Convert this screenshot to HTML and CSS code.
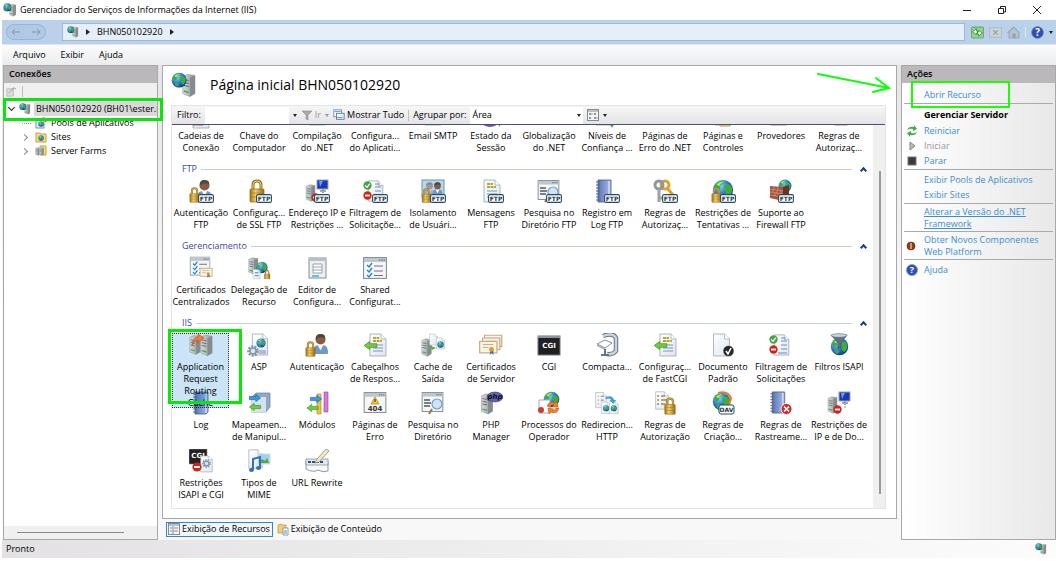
FILE: index.html
```html
<!DOCTYPE html>
<html lang="pt-BR">
<head>
<meta charset="utf-8">
<title>Gerenciador do Serviços de Informações da Internet (IIS)</title>
<link rel="stylesheet" href="styles.css">
</head>
<body>
<svg class="sprite" aria-hidden="true">
  <defs>
    <radialGradient id="gBlue" cx=".35" cy=".3" r=".8"><stop offset="0" stop-color="#8fd4ff"/><stop offset=".5" stop-color="#2a78d8"/><stop offset="1" stop-color="#0b2f86"/></radialGradient>
    <linearGradient id="gGold" x1="0" x2="1"><stop offset="0" stop-color="#a97413"/><stop offset=".4" stop-color="#f0cd6a"/><stop offset="1" stop-color="#9a6a12"/></linearGradient>
    <linearGradient id="gSteel" x1="0" x2="1"><stop offset="0" stop-color="#d9dcde"/><stop offset="1" stop-color="#8d9296"/></linearGradient>
    <linearGradient id="gPage" x1="0" y1="0" x2="1" y2="1"><stop offset="0" stop-color="#ffffff"/><stop offset="1" stop-color="#dde6ee"/></linearGradient>
    <linearGradient id="gNote" x1="0" x2="1"><stop offset="0" stop-color="#5875b8"/><stop offset="1" stop-color="#a9bde4"/></linearGradient>
  </defs>
  <symbol id="globe" viewBox="0 0 24 24"><circle cx="12" cy="12" r="11" fill="url(#gBlue)"/><path d="M3 7Q7 1 13 2Q12 6 9 7Q10 11 6 12Q2 12 3 7ZM15 6Q20 5 22 10Q22 16 18 19Q14 17 15 13Q11 10 15 6ZM6 15Q11 15 12 19Q10 22 8 21Q5 19 6 15Z" fill="#3fae34"/><path d="M5 6Q9 2 13 3Q9 5 8 8Z" fill="#a9ea80"/></symbol>
  <symbol id="tower" viewBox="0 0 14 24"><path d="M1 3L6 1L13 2V20L8 23L1 20Z" fill="url(#gSteel)" stroke="#8b8f94" stroke-width=".6"/><path d="M8 4L13 2V20L8 23Z" fill="#868b8f"/><path d="M2 6L7 7M2 9L7 10M2 12L7 13" stroke="#63686c"/><path d="M2 17.500L7 19" stroke="#37b34a" stroke-width="1.500"/></symbol>
  <symbol id="server" viewBox="0 0 24 24"><use href="#tower" x="10" y="1" width="13" height="23"/><use href="#globe" x="0" y="0" width="15" height="15"/></symbol>
  <symbol id="page" viewBox="0 0 18 24"><path d="M1 1H12L17 6V23H1Z" fill="url(#gPage)" stroke="#a3adb4" stroke-width=".9"/><path d="M12 1V6H17" fill="#fff" stroke="#a3adb4" stroke-width=".8"/></symbol>
  <symbol id="text" viewBox="0 0 18 24"><use href="#page" width="18" height="24"/><path d="M4 5H10M4 8H13" stroke="#b5a529" stroke-width="1.800" stroke-dasharray="3 .6"/><path d="M4 12H14M4 15H14M4 18H14" stroke="#7793c8" stroke-width="1.200"/></symbol>
  <symbol id="lock" viewBox="0 0 16 24"><path d="M4 12V6Q4 2 8 2Q12 2 12 6V12" fill="none" stroke="#9b7419" stroke-width="3"/><path d="M4 12V6Q4 2 8 2Q12 2 12 6V12" fill="none" stroke="#ead07a" stroke-width="1"/><rect x="1" y="10" width="14" height="13" rx="1" fill="url(#gGold)" stroke="#8f6515" stroke-width=".7"/><path d="M2 14H14M2 18H14" stroke="#8f6515" stroke-opacity=".5"/></symbol>
  <symbol id="user" viewBox="0 0 18 24"><path d="M1 23Q0 14 6 13H12Q18 14 17 23Z" fill="#6f9ac6"/><path d="M6 13L9 19L12 13Z" fill="#fff"/><circle cx="9" cy="7" r="5.500" fill="#8a5a3a"/><path d="M4 7Q3 1 9 1Q15 1 14 6Q9 3 4 7Z" fill="#4d4644"/></symbol>
  <symbol id="ftp" viewBox="0 0 16 9"><rect x=".6" y=".6" width="14.800" height="7.800" rx="1.500" fill="#fff" stroke="#274a63" stroke-width="1.100"/><text x="8" y="6.900" class="badge-text">FTP</text></symbol>
  <symbol id="win" viewBox="0 0 24 22"><rect x=".6" y=".6" width="22.800" height="20.800" fill="#f4f6f7" stroke="#7d878e" stroke-width="1"/><rect x="1" y="1" width="22" height="4" fill="#bfc7cc"/><path d="M16 3H22" stroke="#5e6a72" stroke-dasharray="1.500 .8"/></symbol>
  <symbol id="checks" viewBox="0 0 24 22"><use href="#win" width="24" height="22"/><path d="M4 8L6 10L9 6M4 13L6 15L9 11M4 18L6 20L9 16" fill="none" stroke="#2389c9" stroke-width="1.400"/><path d="M11 9H20M11 14H20M11 18.500H20" stroke="#7a6b8c" stroke-width="1.200"/></symbol>
  <symbol id="ok" viewBox="0 0 10 10"><circle cx="5" cy="5" r="4.600" fill="#47a447"/><path d="M2.500 5L4.500 7L7.500 3" fill="none" stroke="#fff" stroke-width="1.300"/></symbol>
  <symbol id="no" viewBox="0 0 10 10"><circle cx="5" cy="5" r="4.600" fill="#cf2418"/><path d="M2.200 5H7.800" stroke="#fff" stroke-width="2"/></symbol>
  <symbol id="note" viewBox="0 0 18 24"><path d="M3 1H16V21L14 23H3Z" fill="url(#gNote)" stroke="#42588b" stroke-width=".8"/><path d="M14 2V22" stroke="#e9effa"/><path d="M1 3H5M1 6H5M1 9H5M1 12H5M1 15H5M1 18H5M1 21H5" stroke="#59677d"/></symbol>
  <symbol id="net" viewBox="0 0 24 24"><use href="#tower" x="0" y="5" width="11" height="18"/><rect x="12" y="1" width="11" height="9" fill="#1838b8" stroke="#9aa3aa"/><path d="M14 2L18 2L15 8Z" fill="#729cf0"/><path d="M15 12H21M18 10V12" stroke="#879096" stroke-width="1.500"/><path d="M18 13V18" stroke="#333" stroke-dasharray="1 1.500"/><use href="#no" x="6" y="14" width="9" height="9"/></symbol>
  <symbol id="filter" viewBox="0 0 24 24"><use href="#page" x="4" y="1" width="17" height="22"/><path d="M12 5H17M12 8H18M12 12H18M12 16H18M9 20H18" stroke="#6e8bc4" stroke-width="1.200"/><use href="#ok" x="0" y="2" width="9" height="9"/><use href="#no" x="0" y="12" width="9" height="9"/></symbol>
  <symbol id="lens" viewBox="0 0 24 24"><use href="#win" x="0" y="1" width="23" height="20"/><path d="M3 9H9M3 12H10M3 15H9" stroke="#4d5964" stroke-width="1.300"/><path d="M11 18L8 23" stroke="#8f7a52" stroke-width="2"/><circle cx="16" cy="13" r="5" fill="#c9e5f8" stroke="#7d9db5" stroke-width="1.200"/></symbol>
  <symbol id="cert" viewBox="0 0 20 15"><rect x=".7" y=".7" width="18" height="12" fill="#faf3e4" stroke="#c5a77f" stroke-width="1.200"/><path d="M4 4H15M4 7H10" stroke="#b7ad98"/><path d="M12 10L11 15L13 13L15 15L15 10" fill="#3c71c1"/><circle cx="13" cy="9" r="2.500" fill="#e49b1c"/></symbol>
  <symbol id="gear" viewBox="0 0 12 12"><circle cx="6" cy="6" r="4.300" fill="none" stroke="#8195aa" stroke-width="3" stroke-dasharray="1.900 1.100"/><circle cx="6" cy="6" r="3" fill="#dde5ed" stroke="#8195aa" stroke-width="1.500"/></symbol>
  <symbol id="garrow" viewBox="0 0 16 10"><path d="M1 5L7 .500V3H15V7H7V9.500Z" fill="#72cb3b" stroke="#3b8f22" stroke-width=".8"/></symbol>
  <symbol id="barrow" viewBox="0 0 16 10"><path d="M15 5L9 .500V3H1V7H9V9.500Z" fill="#379be2" stroke="#175fa5" stroke-width=".8"/></symbol>

  <symbol id="i-auth" viewBox="0 0 24 24"><use href="#user" x="7" y="0" width="17" height="22"/><use href="#lock" x="0" y="8" width="11" height="16"/></symbol>
  <symbol id="i-iso" viewBox="0 0 24 24"><rect x="1" y="1" width="22" height="17" fill="#b5d7ef" stroke="#6c93b1"/><use href="#user" x="3" y="2" width="11" height="16" opacity=".5"/><use href="#user" x="11" y="2" width="11" height="16"/><use href="#lock" x="0" y="9" width="11" height="15"/></symbol>
  <symbol id="i-keys" viewBox="0 0 24 24"><g fill="none"><circle cx="12" cy="6" r="4" stroke="#e0a32a" stroke-width="3"/><path d="M14 9L20 16" stroke="#e0a32a" stroke-width="3"/><circle cx="6" cy="6" r="4" stroke="#8e959c" stroke-width="3"/><path d="M6 10V23M6 19H9" stroke="#9ca3aa" stroke-width="3"/></g></symbol>
  <symbol id="i-globelock" viewBox="0 0 24 24"><use href="#globe" x="1" y="0" width="22" height="22"/><use href="#lock" x="0" y="8" width="11" height="16"/></symbol>
  <symbol id="i-wall" viewBox="0 0 24 24"><use href="#globe" x="9" y="0" width="14" height="14"/><path d="M1 7L14 8V22L1 19Z" fill="#a6533d"/><path d="M14 8L20 6V19L14 22Z" fill="#713124"/><path d="M1 10L14 12M1 13L14 15M1 16L14 18M5 7V10M9 8V11M4 11V13M8 12V15M12 12V15M6 14V17M10 15V18" stroke="#d99d88" stroke-width=".7"/></symbol>
  <symbol id="i-certs" viewBox="0 0 25 24"><use href="#checks" x="0" y="0" width="23" height="20"/><use href="#cert" x="11" y="10" width="14" height="14"/></symbol>
  <symbol id="i-deleg" viewBox="0 0 25 24"><use href="#tower" x="1" y="0" width="11" height="20"/><use href="#globe" x="9" y="5" width="13" height="13"/><use href="#page" x="5" y="13" width="10" height="11"/><path d="M8 17H12M8 20H12" stroke="#3b83cd"/><use href="#lock" x="17" y="14" width="8" height="10"/></symbol>
  <symbol id="i-editor" viewBox="0 0 24 24"><rect x="4" y="2" width="17" height="20" fill="#eceff1" stroke="#838d94"/><rect x="4" y="2" width="17" height="3" fill="#b8c0c6"/><path d="M8 8H17V17H8ZM8 11H17M8 14H17" fill="#fff" stroke="#9aa4ab"/><path d="M7 20H14" stroke="#32b7ea" stroke-width="1.500"/></symbol>
  <symbol id="i-arr" viewBox="0 0 24 24"><use href="#tower" x="0" y="1" width="12" height="22"/><use href="#tower" x="11" y="1" width="13" height="23"/><path d="M3 12Q4 5 9 4V1L15 5L9 10V7Q5 8 3 12Z" fill="#f17d31" stroke="#b74b12" stroke-width=".6"/></symbol>
  <symbol id="i-asp" viewBox="0 0 24 24"><use href="#page" x="4" y="0" width="18" height="23"/><use href="#globe" x="9" y="5" width="10" height="10"/><path d="M12 18H19M12 20H19" stroke="#6e8bc4"/><use href="#gear" x="0" y="12" width="12" height="12"/></symbol>
  <symbol id="i-head" viewBox="0 0 24 24"><use href="#text" x="6" y="0" width="18" height="24"/><use href="#garrow" x="0" y="8" width="15" height="9"/></symbol>
  <symbol id="i-cache" viewBox="0 0 24 24"><use href="#tower" x="0" y="5" width="11" height="19"/><use href="#page" x="8" y="0" width="9" height="13"/><use href="#page" x="15" y="4" width="9" height="13"/><use href="#globe" x="16" y="8" width="7" height="7"/><path d="M8 12L15 15L11 17Z" fill="#4bbb35"/></symbol>
  <symbol id="i-scert" viewBox="0 0 25 24"><use href="#cert" x="5" y="1" width="20" height="15"/><use href="#cert" x="3" y="4" width="20" height="15"/><use href="#cert" x="0" y="7" width="20" height="16"/></symbol>
  <symbol id="i-cgi" viewBox="0 0 24 24"><rect x="1" y="3" width="22" height="19" fill="#1e2022" stroke="#71777c"/><path d="M1 4H23" stroke="#8c959b" stroke-width="2"/><text x="12" y="15" class="cgi-text">CGI</text></symbol>
  <symbol id="i-comp" viewBox="0 0 24 24"><path d="M8 3Q18 -1 21 5V18Q18 22 12 21" fill="none" stroke="#657382" stroke-width="4.500"/><path d="M8 3Q18 -1 21 5V18Q18 22 12 21" fill="none" stroke="#c9d3dc" stroke-width="2.500"/><path d="M2 11L10 7L17 10L10 15Z" fill="#fff" stroke="#889098"/><path d="M2 11V13L10 17V15Z" fill="#a6aeb5"/><path d="M10 16V22M6 22H14" stroke="#667480" stroke-width="2"/></symbol>
  <symbol id="i-def" viewBox="0 0 24 24"><use href="#page" x="1" y="0" width="19" height="24"/><circle cx="17.500" cy="18" r="5.500" fill="#22272b" stroke="#fff" stroke-width=".5"/><path d="M15 18L17 21L20 15" fill="none" stroke="#fff" stroke-width="1.600"/></symbol>
  <symbol id="i-isapi" viewBox="0 0 24 24"><use href="#globe" x="3" y="4" width="19" height="19"/><path d="M4 2Q12 5 20 2L14 10V15H11V10Z" fill="#5c7386" stroke="#354756" stroke-width=".6"/><ellipse cx="12" cy="2.500" rx="8" ry="1.800" fill="#c9d6e0" stroke="#536777" stroke-width=".6"/></symbol>
  <symbol id="i-map" viewBox="0 0 24 24"><path d="M5 6L9 2H23V16L19 21H5Z" fill="#91a9c5" stroke="#6b819c" stroke-width=".7"/><path d="M5 6H19V21H5Z" fill="#d5e1ef"/><use href="#barrow" x="0" y="3" width="16" height="8"/><use href="#garrow" x="0" y="12" width="16" height="8"/></symbol>
  <symbol id="i-mod" viewBox="0 0 24 24"><path d="M12 3H16V23H12Z" fill="#f0c33b" stroke="#a8801c" stroke-width=".6"/><path d="M19 1H23V21H19Z" fill="#d57ad6" stroke="#9a3e9b" stroke-width=".6"/><use href="#barrow" x="4" y="4" width="14" height="8"/><use href="#garrow" x="0" y="13" width="15" height="8"/></symbol>
  <symbol id="i-404" viewBox="0 0 24 24"><use href="#win" x="0" y="1" width="24" height="21"/><path d="M12 6L16 13H8Z" fill="#f7ca2c" stroke="#aa7f13" stroke-width=".7"/><path d="M12 8V11" stroke="#222"/><text x="12" y="20" class="err-text">404</text></symbol>
  <symbol id="i-php" viewBox="0 0 24 24"><use href="#tower" x="1" y="2" width="14" height="22"/><ellipse cx="16" cy="6" rx="8" ry="5" fill="#5f64b4" stroke="#2a2e6a" stroke-width=".5"/><text x="16" y="8" class="php-text">php</text></symbol>
  <symbol id="i-proc" viewBox="0 0 24 24"><use href="#globe" x="6" y="0" width="17" height="17"/><path d="M2 9H13V22H2Z" fill="#fff" stroke="#a4adb4"/><circle cx="4" cy="19" r="3" fill="#d33b2c"/><path d="M10 15Q13 9 18 12L20 10L21 16L15 16L17 14Q14 13 13 16ZM22 17Q20 24 14 21L12 23L11 17L17 18L15 20Q18 20 19 17Z" fill="#f37d23" stroke="#ba4c0a" stroke-width=".5"/></symbol>
  <symbol id="i-redir" viewBox="0 0 25 24"><use href="#page" x="0" y="0" width="13" height="18"/><path d="M3 5H4M3 9H4M3 13H4M6 5H9M6 9H9" stroke="#777"/><use href="#page" x="6" y="10" width="10" height="14"/><use href="#page" x="14" y="10" width="11" height="14"/><use href="#globe" x="8" y="14" width="7" height="7"/><use href="#globe" x="16" y="14" width="7" height="7"/><path d="M11 6Q18 3 20 9H22L19 13L15 9H17Q15 6 11 8Z" fill="#3d9fdb"/></symbol>
  <symbol id="i-rauth" viewBox="0 0 24 24"><use href="#page" x="1" y="0" width="16" height="19"/><path d="M4 5H6M4 9H6M4 13H6M8 5H12M8 9H14M8 13H12" stroke="#a38c54" stroke-width="1.300"/><use href="#lock" x="11" y="6" width="12" height="18"/></symbol>
  <symbol id="i-dav" viewBox="0 0 24 24"><use href="#globe" x="1" y="1" width="19" height="19"/><path d="M7 2Q16 -1 20 7L18 14" fill="none" stroke="#e77826" stroke-width="2"/><rect x="8" y="14" width="15" height="9" rx="2" fill="#fff" stroke="#274a63"/><text x="15.500" y="20.500" class="badge-text">DAV</text></symbol>
  <symbol id="i-trace" viewBox="0 0 24 24"><use href="#note" x="0" y="0" width="18" height="23"/><circle cx="17.500" cy="18" r="5.500" fill="#c62f2b" stroke="#eee"/><path d="M15 15.500L20 20.500M20 15.500L15 20.500" stroke="#fff" stroke-width="1.600"/></symbol>
  <symbol id="i-rcgi" viewBox="0 0 24 24"><rect x="0" y="0" width="18" height="15" fill="#222" stroke="#888" stroke-width=".6"/><text x="9" y="9" class="cgi-text">CGI</text><use href="#page" x="11" y="6" width="13" height="18"/><use href="#gear" x="13" y="10" width="9" height="9"/><use href="#no" x="3" y="13" width="10" height="10"/></symbol>
  <symbol id="i-mime" viewBox="0 0 24 24"><use href="#page" x="1" y="0" width="15" height="20"/><rect x="11" y="5" width="12" height="10" fill="#9dd0ec" stroke="#d6dce0"/><path d="M12 14L15 10L18 12L20 9L22 14Z" fill="#5ea247"/><path d="M6 21V10L13 8V19" fill="none" stroke="#2f72b7" stroke-width="2"/><ellipse cx="4.500" cy="21" rx="2.500" ry="2" fill="#2f72b7"/><ellipse cx="11.500" cy="19" rx="2.500" ry="2" fill="#2f72b7"/></symbol>
  <symbol id="i-url" viewBox="0 0 24 24"><path d="M1 12H23V22Q18 24 13 21Q8 24 1 20Z" fill="#f6f7f7" stroke="#949b9f"/><rect x="1" y="10" width="22" height="6" fill="#ddeaf4" stroke="#7d8990" stroke-width=".7"/><path d="M3 13H19" stroke="#31536f" stroke-width="2" stroke-dasharray="3 1"/><path d="M10 14L12 10L21 0L24 2L14 13Z" fill="#f2e8cf" stroke="#8e7751" stroke-width=".7"/></symbol>
  <symbol id="help" viewBox="0 0 12 12"><circle cx="6" cy="6" r="5.500" fill="#2c50b4" stroke="#8392b5" stroke-width=".8"/><text x="6" y="9" class="help-text">?</text></symbol>
</svg>

<div class="window">
  <header class="titlebar">
    <svg class="ico14"><use href="#server"/></svg>
    <h1>Gerenciador do Serviços de Informações da Internet (IIS)</h1>
    <div class="wbtns">
      <button aria-label="Minimizar"><svg viewBox="0 0 10 10"><path d="M1 5.500H9"/></svg></button>
      <button aria-label="Restaurar"><svg viewBox="0 0 10 10"><path d="M1.500 3.500H6.500V8.500H1.500ZM3.500 3V1.500H8.500V7H7"/></svg></button>
      <button aria-label="Fechar"><svg viewBox="0 0 10 10"><path d="M1 1L9 9M9 1L1 9"/></svg></button>
    </div>
  </header>

  <nav class="address">
    <div class="history">
      <button aria-label="Voltar"><svg viewBox="0 0 10 8"><path d="M9 4H1M4 1L1 4L4 7"/></svg></button>
      <button aria-label="Avançar"><svg viewBox="0 0 10 8"><path d="M1 4H9M6 1L9 4L6 7"/></svg></button>
    </div>
    <div class="crumbs"><svg class="ico12"><use href="#server"/></svg><i class="tri"></i><span>BHN050102920</span><i class="tri"></i></div>
    <div class="tools">
      <button aria-label="Atualizar"><svg viewBox="0 0 12 12"><rect x=".5" y="1" width="11" height="10" rx="1" fill="#8fd68a" stroke="#78a278"/><path d="M5 2.500L1.500 5.500L5 8V6.500H6V4.500H5ZM7 4L10.500 6.500L7 9.500V7.500H6V5.500H7Z" fill="#fff" stroke="#1d8526" stroke-width=".7"/></svg></button>
      <button aria-label="Parar navegação"><svg viewBox="0 0 12 12"><rect x=".5" y="1.500" width="11" height="9" fill="#ccd2d8" stroke="#b5bcc4"/><path d="M4 4L8 8M8 4L4 8" stroke="#929aa3"/></svg></button>
      <button aria-label="Início"><svg viewBox="0 0 12 12"><path d="M1 6L6 1L11 6V11H2V6Z" fill="#b9c3cc" stroke="#9aa7b4"/><path d="M5 11V7H8V11" fill="#91a2b3"/></svg></button>
      <i class="vsep"></i>
      <button aria-label="Ajuda"><svg viewBox="0 0 12 12"><use href="#help"/></svg></button>
      <i class="caret"></i>
    </div>
  </nav>

  <nav class="menu"><button>Arquivo</button><button>Exibir</button><button>Ajuda</button></nav>

  <main class="body">
    <aside class="connections">
      <h2>Conexões</h2>
      <div class="ctools"><button aria-label="Conectar"><svg viewBox="0 0 12 12"><path d="M1 3H8V11H1Z" fill="#ddd" stroke="#bbb"/><path d="M3 8L8 2L11 3M8 2V5" fill="none" stroke="#aaa"/></svg></button><i class="vsep"></i></div>
      <ul class="tree">
        <li class="root"><i class="chev open"></i><svg class="ico12"><use href="#server"/></svg><span class="sel">BHN050102920 (BH01\ester.rezende)</span></li>
        <li class="child"><i class="branch"></i><svg class="ico12" viewBox="0 0 12 12"><rect x="1" y="3" width="8" height="8" fill="#e5edf2" stroke="#7893a2"/><use href="#globe" x="3" y="4" width="6" height="6"/><path d="M5 2L9 1L11 5" fill="none" stroke="#cc3d32" stroke-width="1.300"/></svg><span>Pools de Aplicativos</span></li>
        <li class="child"><i class="chev"></i><svg class="ico12" viewBox="0 0 12 12"><path d="M1 2H5L6 3H11V11H1Z" fill="#f6dc83" stroke="#c8a13a"/><use href="#globe" x="3" y="4" width="6" height="6"/></svg><span>Sites</span></li>
        <li class="child"><i class="chev"></i><svg class="ico12" viewBox="0 0 12 12"><path d="M5 1H11V10H5Z" fill="#f6dc83" stroke="#c8a13a"/><use href="#tower" x="0" y="2" width="5" height="9"/><use href="#tower" x="4" y="2" width="5" height="9"/></svg><span>Server Farms</span></li>
      </ul>
      <div class="hscroll"><i></i></div>
    </aside>

    <section class="center">
      <div class="home">
        <div class="hero"><svg><use href="#server"/></svg><h2>Página inicial BHN050102920</h2></div>
        <div class="list">
          <div class="filterbar">
            <label for="flt">Filtro:</label>
            <input id="flt" type="text"><i class="caret"></i>
            <button class="dim"><svg class="ico12" viewBox="0 0 12 12"><path d="M1 2H11L7 6V11L5 10V6Z" fill="#aaa" stroke="#8b8b8b" stroke-width=".6"/></svg>Ir</button><i class="caret dimc"></i>
            <button><svg class="ico12" viewBox="0 0 14 14"><rect x="1" y="1" width="9" height="8" fill="#fff" stroke="#668cad"/><rect x="4" y="5" width="9" height="7" fill="#e9f1f8" stroke="#567895"/><path d="M5 10H11M2 3H9" stroke="#3e91cc"/></svg>Mostrar Tudo</button>
            <i class="vsep"></i>
            <label for="grp">Agrupar por:</label>
            <span class="combo"><select id="grp"><option>Área</option></select><i class="caret"></i></span>
            <button aria-label="Exibição"><svg class="ico12" viewBox="0 0 12 12"><rect x=".5" y=".5" width="11" height="11" fill="#f4f4f4" stroke="#858b90"/><path d="M0 2H12" stroke="#858b90"/><path d="M3 4V6M8 4V6M3 8V10M8 8V10" stroke="#5c7fae" stroke-width="1.500"/><path d="M5 4V6M10 8V10" stroke="#c79e45"/></svg></button><i class="caret"></i>
          </div>
          <div class="viewport">
            <div class="scroller">
              <ul class="grid scrolled">
                <li><svg><use href="#page" y="3"/><use href="#lock" x="2" y="6" width="14" height="18"/></svg>Cadeias de<br>Conexão</li>
                <li><svg><use href="#tower"/></svg>Chave do<br>Computador</li>
                <li><svg><use href="#page"/></svg>Compilação<br>do .NET</li>
                <li><svg><use href="#win"/></svg>Configura...<br>do Aplicati...</li>
                <li><svg><use href="#page"/></svg>Email SMTP</li>
                <li><svg><ellipse cx="11" cy="20" rx="8" ry="5" fill="#73529c"/><path d="M17 20L21 25L22 18Z" fill="#e67e2d"/></svg>Estado da<br>Sessão</li>
                <li><svg><use href="#globe"/></svg>Globalização<br>do .NET</li>
                <li><svg><use href="#page" x="-3"/><path d="M14 20H20L17 24Z" fill="#35bb2e" stroke="#35bb2e" stroke-width="2"/></svg>Níveis de<br>Confiança ...</li>
                <li><svg><use href="#win"/></svg>Páginas de<br>Erro do .NET</li>
                <li><svg><use href="#page"/><path d="M9 17H19V24H9Z" fill="#f5e89c" stroke="#bd963b"/></svg>Páginas e<br>Controles</li>
                <li><svg><use href="#lock" x="-4"/><use href="#globe" x="8" y="8" width="16" height="16"/></svg>Provedores</li>
                <li><svg><use href="#lock" x="2"/></svg>Regras de<br>Autorizaç...</li>
              </ul>

              <h3><span>FTP</span><i class="fold"></i></h3>
              <ul class="grid">
                <li><svg><use href="#i-auth"/><use href="#ftp" x="9" y="15" width="16" height="9"/></svg>Autenticação<br>FTP</li>
                <li><svg><use href="#lock" x="2" width="16" height="24"/><use href="#ftp" x="9" y="15" width="16" height="9"/></svg>Configuraç...<br>de SSL FTP</li>
                <li><svg><use href="#net"/><use href="#ftp" x="9" y="15" width="16" height="9"/></svg>Endereço IP e<br>Restrições ...</li>
                <li><svg><use href="#filter"/><use href="#ftp" x="9" y="15" width="16" height="9"/></svg>Filtragem de<br>Solicitaçõe...</li>
                <li><svg><use href="#i-iso"/><use href="#ftp" x="9" y="15" width="16" height="9"/></svg>Isolamento<br>de Usuári...</li>
                <li><svg><use href="#text" x="1"/><use href="#ftp" x="9" y="15" width="16" height="9"/></svg>Mensagens<br>FTP</li>
                <li><svg><use href="#lens"/><use href="#ftp" x="9" y="15" width="16" height="9"/></svg>Pesquisa no<br>Diretório FTP</li>
                <li><svg><use href="#note" width="18" height="24"/><use href="#ftp" x="9" y="15" width="16" height="9"/></svg>Registro em<br>Log FTP</li>
                <li><svg><use href="#i-keys"/><use href="#ftp" x="9" y="15" width="16" height="9"/></svg>Regras de<br>Autorizaç...</li>
                <li><svg><use href="#i-globelock"/><use href="#ftp" x="9" y="15" width="16" height="9"/></svg>Restrições de<br>Tentativas ...</li>
                <li><svg><use href="#i-wall"/><use href="#ftp" x="9" y="15" width="16" height="9"/></svg>Suporte ao<br>Firewall FTP</li>
              </ul>

              <h3><span>Gerenciamento</span><i class="fold"></i></h3>
              <ul class="grid">
                <li><svg><use href="#i-certs"/></svg>Certificados<br>Centralizados</li>
                <li><svg><use href="#i-deleg"/></svg>Delegação de<br>Recurso</li>
                <li><svg><use href="#i-editor"/></svg>Editor de<br>Configura...</li>
                <li><svg><use href="#checks"/></svg>Shared<br>Configurat...</li>
              </ul>

              <h3><span>IIS</span><i class="fold"></i></h3>
              <ul class="grid">
                <li class="picked"><svg><use href="#i-arr"/></svg>Application<br>Request<br>Routing<br>Cache</li>
                <li><svg><use href="#i-asp"/></svg>ASP</li>
                <li><svg><use href="#i-auth"/></svg>Autenticação</li>
                <li><svg><use href="#i-head"/></svg>Cabeçalhos<br>de Respos...</li>
                <li><svg><use href="#i-cache"/></svg>Cache de<br>Saída</li>
                <li><svg><use href="#i-scert"/></svg>Certificados<br>de Servidor</li>
                <li><svg><use href="#i-cgi"/></svg>CGI</li>
                <li><svg><use href="#i-comp"/></svg>Compacta...</li>
                <li><svg><use href="#i-head"/></svg>Configuraç...<br>de FastCGI</li>
                <li><svg><use href="#i-def"/></svg>Documento<br>Padrão</li>
                <li><svg><use href="#filter"/></svg>Filtragem de<br>Solicitações</li>
                <li><svg><use href="#i-isapi"/></svg>Filtros ISAPI</li>
                <li><svg><use href="#note"/></svg>Log</li>
                <li><svg><use href="#i-map"/></svg>Mapeamen...<br>de Manipul...</li>
                <li><svg><use href="#i-mod"/></svg>Módulos</li>
                <li><svg><use href="#i-404"/></svg>Páginas de<br>Erro</li>
                <li><svg><use href="#lens"/></svg>Pesquisa no<br>Diretório</li>
                <li><svg><use href="#i-php"/></svg>PHP<br>Manager</li>
                <li><svg><use href="#i-proc"/></svg>Processos do<br>Operador</li>
                <li><svg><use href="#i-redir"/></svg>Redirecion...<br>HTTP</li>
                <li><svg><use href="#i-rauth"/></svg>Regras de<br>Autorização</li>
                <li><svg><use href="#i-dav"/></svg>Regras de<br>Criação...</li>
                <li><svg><use href="#i-trace"/></svg>Regras de<br>Rastreame...</li>
                <li><svg><use href="#net"/></svg>Restrições de<br>IP e de Do...</li>
                <li><svg><use href="#i-rcgi"/></svg>Restrições<br>ISAPI e CGI</li>
                <li><svg><use href="#i-mime"/></svg>Tipos de<br>MIME</li>
                <li><svg><use href="#i-url"/></svg>URL Rewrite</li>
              </ul>
            </div>
            <div class="vscroll"><i></i></div>
          </div>
        </div>
      </div>
      <div class="tabs">
        <button class="on"><svg class="ico12" viewBox="0 0 12 12"><rect x=".5" y=".5" width="11" height="11" fill="#f4f4f4" stroke="#858b90"/><path d="M0 2H12M2 5H4M2 8H4M6 5H10M6 8H10M5 3V11" stroke="#858b90"/></svg>Exibição de Recursos</button>
        <button><svg class="ico12" viewBox="0 0 12 12"><path d="M1 2L4 1L5 2H9V10H1Z" fill="#f3cf74" stroke="#bb9039" stroke-width=".7"/><path d="M6 5H11V12H6Z" fill="#fff" stroke="#6889a8" stroke-width=".8"/><path d="M7 8H10M7 10H10" stroke="#4d8dcc"/></svg>Exibição de Conteúdo</button>
      </div>
    </section>

    <aside class="actions">
      <h2>Ações</h2>
      <ul>
        <li><a href="#">Abrir Recurso</a></li>
      </ul>
      <ul>
        <li class="title">Gerenciar Servidor</li>
        <li><svg viewBox="0 0 12 12"><path d="M1 5Q3 1 8 2V0L11 4L7 6V4Q4 3 1 5ZM11 7Q9 11 4 10V12L1 8L5 6V8Q8 9 11 7Z" fill="#42ad45"/></svg><a href="#">Reiniciar</a></li>
        <li><svg viewBox="0 0 12 12"><path d="M4 2L9 6L4 10Z" fill="#bbb" stroke="#888"/></svg><span class="off">Iniciar</span></li>
        <li><svg viewBox="0 0 12 12"><rect x="2" y="2" width="8" height="8" fill="#3b3b3b" stroke="#777"/></svg><a href="#">Parar</a></li>
      </ul>
      <ul>
        <li><a href="#">Exibir Pools de Aplicativos</a></li>
        <li><a href="#">Exibir Sites</a></li>
      </ul>
      <ul>
        <li class="two"><a class="hot" href="#">Alterar a Versão do .NET Framework</a></li>
      </ul>
      <ul>
        <li class="two"><svg viewBox="0 0 12 12"><circle cx="5" cy="6" r="4" fill="#8e3b16" stroke="#5a230c" stroke-width=".6"/><path d="M5 3V9" stroke="#f3b589" stroke-width="1.500"/></svg><a href="#">Obter Novos Componentes Web Platform</a></li>
      </ul>
      <ul>
        <li><svg viewBox="0 0 12 12"><use href="#help"/></svg><a href="#">Ajuda</a></li>
      </ul>
    </aside>
  </main>

  <footer class="status"><span>Pronto</span><svg class="ico12"><use href="#server"/></svg></footer>

  <div class="mark mark-tree"></div>
  <div class="mark mark-item"></div>
  <div class="mark mark-action"></div>
  <svg class="arrow" viewBox="0 0 76 22"><path d="M2 3L73 17M60 7L73 17L57 21"/></svg>
</div>
</body>
</html>
```

FILE: styles.css
```css
* { box-sizing: border-box; }
body {
  margin: 0;
  background: #fff;
  color: #000;
  font: 9px/12px "Open Sans", "Noto Sans", sans-serif;
}
ul { list-style: none; margin: 0; padding: 0; }
h1, h2, h3 { margin: 0; font: inherit; }
button, input, select { font: inherit; color: inherit; border: 0; background: none; padding: 0; margin: 0; }
svg { display: block; flex: none; overflow: visible; }
.sprite { position: absolute; width: 0; height: 0; overflow: hidden; }
.ico12 { width: 12px; height: 12px; }
.ico14 { width: 14px; height: 14px; }
.badge-text { font: bold 6px "DejaVu Sans", sans-serif; text-anchor: middle; fill: #243746; }
.cgi-text { font: bold 7px "DejaVu Sans", sans-serif; text-anchor: middle; fill: #fff; }
.err-text { font: bold 7px "DejaVu Sans", sans-serif; text-anchor: middle; fill: #333; }
.php-text { font: italic bold 7px "DejaVu Sans", sans-serif; text-anchor: middle; fill: #111; }
.help-text { font: bold 9px "Open Sans", sans-serif; text-anchor: middle; fill: #fff; }

.window { position: relative; display: flex; flex-direction: column; min-height: 100vh; padding: 0 0 3px 2px; overflow: hidden; }

.titlebar { display: flex; align-items: center; height: 20px; gap: 3px; padding-left: 1px; }
.wbtns { margin-left: auto; display: flex; gap: 25px; padding-right: 14px; }
.wbtns button { width: 10px; height: 10px; }
.wbtns svg, .history svg { fill: none; stroke: #222; stroke-width: 1; width: 10px; }
.history svg { stroke: #8397ad; }

.address { display: flex; align-items: center; height: 25px; background: #b9d1ea; gap: 16px; padding-left: 4px; border-bottom: 1px solid #dce7f2; }
.history { display: flex; align-items: center; justify-content: space-between; width: 40px; height: 16px; padding: 0 4px; border: 1px solid #9bb4d2; border-radius: 8px; background: #afc8e4; }
.crumbs { flex: 1; display: flex; align-items: center; gap: 7px; height: 18px; padding-left: 4px; background: #e6eefa; border: 1px solid #a3b9d2; }
.tri { border: 3px solid transparent; border-left: 4px solid #222; border-right: 0; }
.tools { display: flex; align-items: center; gap: 5px; margin-left: -10px; padding-right: 3px; }
.tools svg { width: 13px; height: 13px; }
.caret { flex: none; border: 2px solid transparent; border-top: 3px solid #222; border-bottom: 0; }
.vsep { width: 1px; height: 11px; background: #c2bdb5; }
.tools .vsep { background: #dce8f5; }

.menu { display: flex; align-items: center; gap: 15px; height: 20px; padding: 0 11px; background: linear-gradient(#fcfcfd, #ebecee); }

.body { flex: 1; display: flex; gap: 4px; min-height: 0; padding-left: 1px; background: linear-gradient(#e5e5e5, #f8f8f8 50%); }
.connections { display: flex; flex-direction: column; width: 155px; border: 1px solid #a8a8a8; background: #fff; overflow: hidden; }
.connections h2, .actions h2 { height: 17px; padding: 2px 5px; background: #bab8bb; font-weight: 600; }
.ctools { display: flex; align-items: center; gap: 5px; height: 16px; padding-left: 2px; background: #f0f0f0; }
.ctools svg { width: 11px; height: 11px; }
.tree { flex: 1; padding-top: 3px; }
.tree li { display: flex; align-items: center; gap: 3px; height: 14px; padding-left: 5px; white-space: nowrap; }
.tree li.child { padding-left: 18px; gap: 4px; }
.chev { flex: none; width: 5px; height: 5px; margin: 0 4px 0 0; border: solid #888; border-width: 1px 1px 0 0; transform: rotate(45deg); }
.chev.open { margin: 0 2px 3px 0; border-color: #222; transform: rotate(135deg); }
.branch { width: 9px; height: 1px; margin-top: 1px; border-top: 1px dotted #999; }
.sel { flex: 1; background: #d9d9d9; height: 14px; padding: 1px 2px; }
.hscroll { height: 13px; background: #f0f0f0; padding: 6px 33px 0 13px; }
.hscroll i { display: block; height: 1px; background: #888; }

.center { flex: 1; min-width: 0; display: flex; flex-direction: column; }
.home { flex: 1; display: flex; flex-direction: column; border: 1px solid #a8a8a8; background: #fff; padding: 0 10px 9px 8px; }
.hero { display: flex; align-items: center; gap: 13px; height: 39px; padding-bottom: 1px; }
.hero svg { width: 26px; height: 26px; }
.hero h2 { font-size: 14px; line-height: 18px; }
.list { flex: 1; display: flex; flex-direction: column; border: 1px solid #e5e5e5; }
.filterbar { display: flex; align-items: center; height: 19px; gap: 4px; padding: 0 5px; background: linear-gradient(#f7f6f7, #e4e3e5); border-bottom: 1px solid #4b4b80; }
.filterbar > * { flex: none; }
.filterbar input { width: 84px; height: 17px; background: #fff; }
.filterbar button { display: flex; align-items: center; gap: 2px; }
.filterbar .dim { color: #999; }
.dimc { border-top-color: #999; }
.combo { display: flex; align-items: center; width: 113px; height: 17px; padding: 0 2px; background: #fff; }
.combo select { flex: 1; appearance: none; outline: 0; }

.viewport { flex: 1 0 383px; display: flex; overflow: hidden; }
.scroller { flex: 1; }
.vscroll { width: 12px; background: #f0f0f0; padding: 46px 4px 14px 6px; }
.vscroll i { display: block; height: 100%; background: #999; }
.grid { display: grid; grid-template-columns: repeat(auto-fill, 58px); grid-auto-rows: 58px; }
.grid.scrolled { margin-top: -23px; }
.grid li { display: flex; flex-direction: column; align-items: center; text-align: center; white-space: nowrap; }
.grid li { display: block; }
.grid svg { width: 24px; height: 24px; margin: 0 auto 4px; }
.grid .picked { z-index: 1; height: 75px; margin-right: 1px; outline: 1px dotted #333; outline-offset: -1px; background: rgba(0, 120, 215, .2); }
.scroller h3 { display: flex; align-items: center; gap: 4px; height: 12px; margin: 3px 5px 4px 10px; color: #3c4799; }
.scroller h3::after { content: ""; order: 1; flex: 1; height: 1px; background: #c3cee6; }
.fold { order: 2; width: 5px; height: 5px; margin: 3px 2px 0 5px; border: solid #173a93; border-width: 2px 0 0 2px; transform: rotate(45deg); }

.tabs { display: flex; align-items: center; gap: 2px; height: 21px; padding: 0 0 1px 4px; }
.tabs button { display: flex; align-items: center; gap: 2px; height: 15px; padding: 0 1px; border: 1px solid transparent; }
.tabs .on { padding-right: 2px; border-color: #2b88d8; background: #f1f6fb; }

.actions { width: 155px; border: 1px solid #a8a8a8; background: linear-gradient(90deg, #fff, #e8e8e8); }
.actions ul { padding: 2px 0 1px; margin: 0 2px; border-bottom: 1px solid #aaa; }
.actions ul:last-child { border: 0; }
.actions li { position: relative; display: flex; align-items: center; height: 15px; padding-left: 20px; }
.actions li.two { height: 24px; }
.actions li.title { height: 17px; font-weight: 700; }
.actions li svg { position: absolute; left: 2px; width: 12px; height: 12px; }
.actions h2 + ul { padding-top: 4px; }
.actions a { color: #3a8fd0; text-decoration: none; }
.actions a.hot { text-decoration: underline; }
.off { color: #999; }

.status { display: flex; align-items: center; justify-content: space-between; height: 18px; padding: 0 9px 0 4px; background: linear-gradient(90deg, #e3e1e3, #fcfcfc); }

.mark { position: absolute; z-index: 5; border: 3px solid #0ae60a; pointer-events: none; }
.mark-tree { left: 3px; top: 98px; width: 160px; height: 23px; }
.mark-item { left: 168px; top: 329px; width: 74px; height: 75px; }
.mark-action { right: 46px; top: 81px; width: 99px; height: 27px; border-width: 2px; border-color: #1cff00; }
.arrow { position: absolute; z-index: 5; right: 164px; top: 71px; width: 76px; height: 22px; fill: none; stroke: #0bff0b; stroke-width: 2; stroke-linecap: round; }
```
